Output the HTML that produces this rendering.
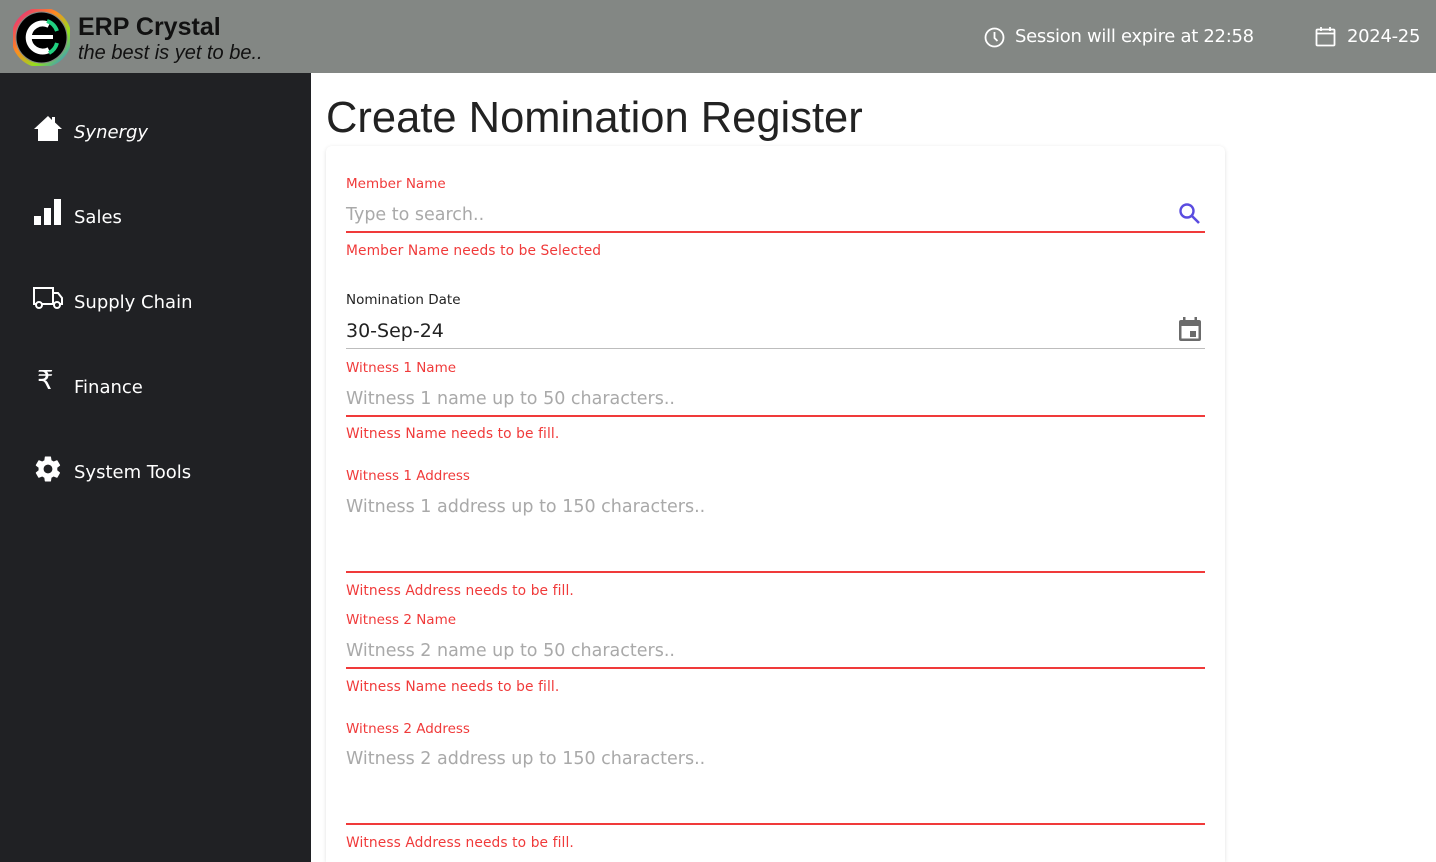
<!DOCTYPE html>
<html style="overflow:hidden;height:862px"><head><meta charset="utf-8"><style>
*{margin:0;padding:0;box-sizing:border-box}
body{width:1436px;height:862px;overflow:hidden;background:#fff;font-family:"DejaVu Sans","Liberation Sans",sans-serif;position:relative}
.a{position:absolute;white-space:nowrap}
.hdr{left:0;top:0;width:1436px;height:73px;background:#838784}
.side{left:0;top:73px;width:311px;height:789px;background:#202124}
.nav{color:#fff;font-size:18px;left:74px}
.card{left:326px;top:146px;width:899px;height:716px;background:#fff;border-radius:6px 6px 0 0;box-shadow:0 1px 4px rgba(0,0,0,.12)}
.lbl{font-size:13.5px;left:346px;color:#f03a3a}
.ph{font-size:17.5px;left:346px;color:#a9a9a9}
.err{font-size:13.8px;left:346px;color:#f03a3a;letter-spacing:.1px}
.ln{left:346px;width:859px;height:2px;background:#f03a3a}
</style></head><body>
<div class="a hdr"></div>
<svg class="a" style="left:13px;top:9px" width="57" height="57" viewBox="0 0 57 57">
<circle cx="28.5" cy="28.5" r="28" fill="none" stroke="url(#g)" stroke-width="4"/>
<defs><linearGradient id="g" x1="0" y1="0" x2="1" y2="1"><stop offset="0" stop-color="#e0208a"/><stop offset=".4" stop-color="#ff8a20"/><stop offset=".7" stop-color="#8de020"/><stop offset="1" stop-color="#2080ff"/></linearGradient></defs>
<circle cx="28.5" cy="28.5" r="25" fill="#000"/>
<path d="M36 16 A14 14 0 1 0 36 41" fill="none" stroke="#fff" stroke-width="6"/>
<path d="M18 28 H40" stroke="#fff" stroke-width="4"/>
<path d="M34 12 A16 16 0 0 1 44 22" fill="none" stroke="#20d080" stroke-width="4"/>
<path d="M44 34 A16 16 0 0 1 36 44" fill="none" stroke="#20d080" stroke-width="4"/>
</svg>
<div class="a" style="left:78px;top:13px;font:bold 25px 'Liberation Sans',sans-serif;color:#111">ERP Crystal</div>
<div class="a" style="left:78px;top:42px;font:italic 20px 'Liberation Sans',sans-serif;color:#111">the best is yet to be..</div>
<svg class="a" style="left:984px;top:27px" width="21" height="21" viewBox="0 0 21 21"><circle cx="10.5" cy="10.5" r="9" fill="none" stroke="#fff" stroke-width="1.8"/><path d="M10.5 5v6l3 3" fill="none" stroke="#fff" stroke-width="1.8"/></svg>
<div class="a" style="left:1015px;top:26px;font-size:18px;color:#fff;letter-spacing:-.3px">Session will expire at 22:58</div>
<svg class="a" style="left:1315px;top:26px" width="21" height="21" viewBox="0 0 21 21"><rect x="1.5" y="3.5" width="18" height="16" rx="1" fill="none" stroke="#fff" stroke-width="1.8"/><path d="M1.5 7.5h18M6 1v4M15 1v4" stroke="#fff" stroke-width="1.8"/></svg>
<div class="a" style="left:1347px;top:26px;font-size:18px;color:#fff;letter-spacing:-.3px">2024-25</div>

<div class="a side"></div>
<svg class="a" style="left:33px;top:114px" width="30" height="28" viewBox="0 0 30 28"><path d="M15 2 L1 15 L5 15 L5 27 L25 27 L25 15 L29 15 L22 8.5 V3 H19 V6 Z" fill="#fff"/></svg>
<div class="a nav" style="top:122px;font-style:italic">Synergy</div>
<svg class="a" style="left:34px;top:199px" width="28" height="27"><rect x="0" y="17" width="7" height="9" fill="#fff"/><rect x="10" y="9" width="7" height="17" fill="#fff"/><rect x="20" y="0" width="7" height="26" fill="#fff"/></svg>
<div class="a nav" style="top:207px">Sales</div>
<svg class="a" style="left:32px;top:286px" width="32" height="24" viewBox="0 0 32 24"><path d="M2 2h19v16H2z M21 7h5l4 5v6h-9" fill="none" stroke="#fff" stroke-width="2"/><circle cx="7" cy="19" r="3" fill="#202124" stroke="#fff" stroke-width="2"/><circle cx="25" cy="19" r="3" fill="#202124" stroke="#fff" stroke-width="2"/></svg>
<div class="a nav" style="top:292px">Supply Chain</div>
<div class="a nav" style="left:37px;top:366px;font-size:26px">₹</div>
<div class="a nav" style="top:377px">Finance</div>
<svg class="a" style="left:33px;top:454px" width="30" height="30" viewBox="0 0 24 24"><path fill="#fff" d="M19.4 13c.04-.3.06-.65.06-1s-.02-.7-.06-1l2.1-1.65c.2-.15.25-.42.12-.64l-2-3.46c-.12-.22-.39-.3-.6-.22l-2.5 1c-.52-.4-1.080-.73-1.7-.98L14.4 2.4c-.04-.24-.24-.4-.48-.4h-4c-.24 0-.44.17-.48.4L9.07 5.05c-.6.25-1.17.58-1.7.98l-2.48-1c-.22-.08-.48 0-.6.22l-2 3.46c-.13.22-.07.49.12.64L4.5 11c-.04.3-.07.67-.07 1s.02.7.06 1l-2.1 1.65c-.2.15-.25.42-.13.64l2 3.460c.12.22.39.3.6.22l2.5-1c.52.4 1.08.73 1.7.98l.37 2.65c.05.24.25.4.49.4h4c.24 0 .44-.17.48-.4l.38-2.65c.6-.25 1.17-.58 1.7-.98l2.48 1c.23.08.48 0 .6-.22l2-3.46c.12-.22.07-.49-.12-.64L19.4 13zM12 15.5c-1.93 0-3.5-1.57-3.5-3.5s1.57-3.5 3.5-3.5 3.5 1.57 3.5 3.5-1.57 3.5-3.5 3.5z"/></svg>
<div class="a nav" style="top:462px">System Tools</div>

<div class="a" style="left:326px;top:94px;font:43.5px 'Liberation Sans',sans-serif;color:#222">Create Nomination Register</div>
<div class="a card"></div>

<div class="a lbl" style="top:176px">Member Name</div>
<div class="a ph" style="top:205px">Type to search..</div>
<svg class="a" style="left:1178px;top:202px" width="24" height="24" viewBox="0 0 24 24"><circle cx="9" cy="9" r="6.5" fill="none" stroke="#5a4ce0" stroke-width="2.4"/><path d="M14 14l7 7" stroke="#5a4ce0" stroke-width="2.6"/></svg>
<div class="a ln" style="top:231px"></div>
<div class="a err" style="top:243px">Member Name needs to be Selected</div>

<div class="a lbl" style="top:292px;color:#222">Nomination Date</div>
<div class="a" style="left:346px;top:320px;font-size:19px;color:#222">30-Sep-24</div>
<svg class="a" style="left:1178px;top:316px" width="24" height="26" viewBox="0 0 24 26"><rect x="1" y="4" width="22" height="21" rx="2" fill="#6b6b6b"/><rect x="3.5" y="10" width="17" height="12.5" fill="#fff"/><rect x="5" y="1" width="2.5" height="5" fill="#6b6b6b"/><rect x="16.5" y="1" width="2.5" height="5" fill="#6b6b6b"/><rect x="12" y="15" width="6" height="6" fill="#6b6b6b"/></svg>
<div class="a" style="left:346px;top:348px;width:859px;height:1px;background:#bdbdbd"></div>

<div class="a lbl" style="top:360px">Witness 1 Name</div>
<div class="a ph" style="top:389px">Witness 1 name up to 50 characters..</div>
<div class="a ln" style="top:415px"></div>
<div class="a err" style="top:426px">Witness Name needs to be fill.</div>

<div class="a lbl" style="top:468px">Witness 1 Address</div>
<div class="a ph" style="top:497px">Witness 1 address up to 150 characters..</div>
<div class="a ln" style="top:571px"></div>
<div class="a err" style="top:583px">Witness Address needs to be fill.</div>

<div class="a lbl" style="top:612px">Witness 2 Name</div>
<div class="a ph" style="top:641px">Witness 2 name up to 50 characters..</div>
<div class="a ln" style="top:667px"></div>
<div class="a err" style="top:679px">Witness Name needs to be fill.</div>

<div class="a lbl" style="top:721px">Witness 2 Address</div>
<div class="a ph" style="top:749px">Witness 2 address up to 150 characters..</div>
<div class="a ln" style="top:823px"></div>
<div class="a err" style="top:835px">Witness Address needs to be fill.</div>
</body></html>
